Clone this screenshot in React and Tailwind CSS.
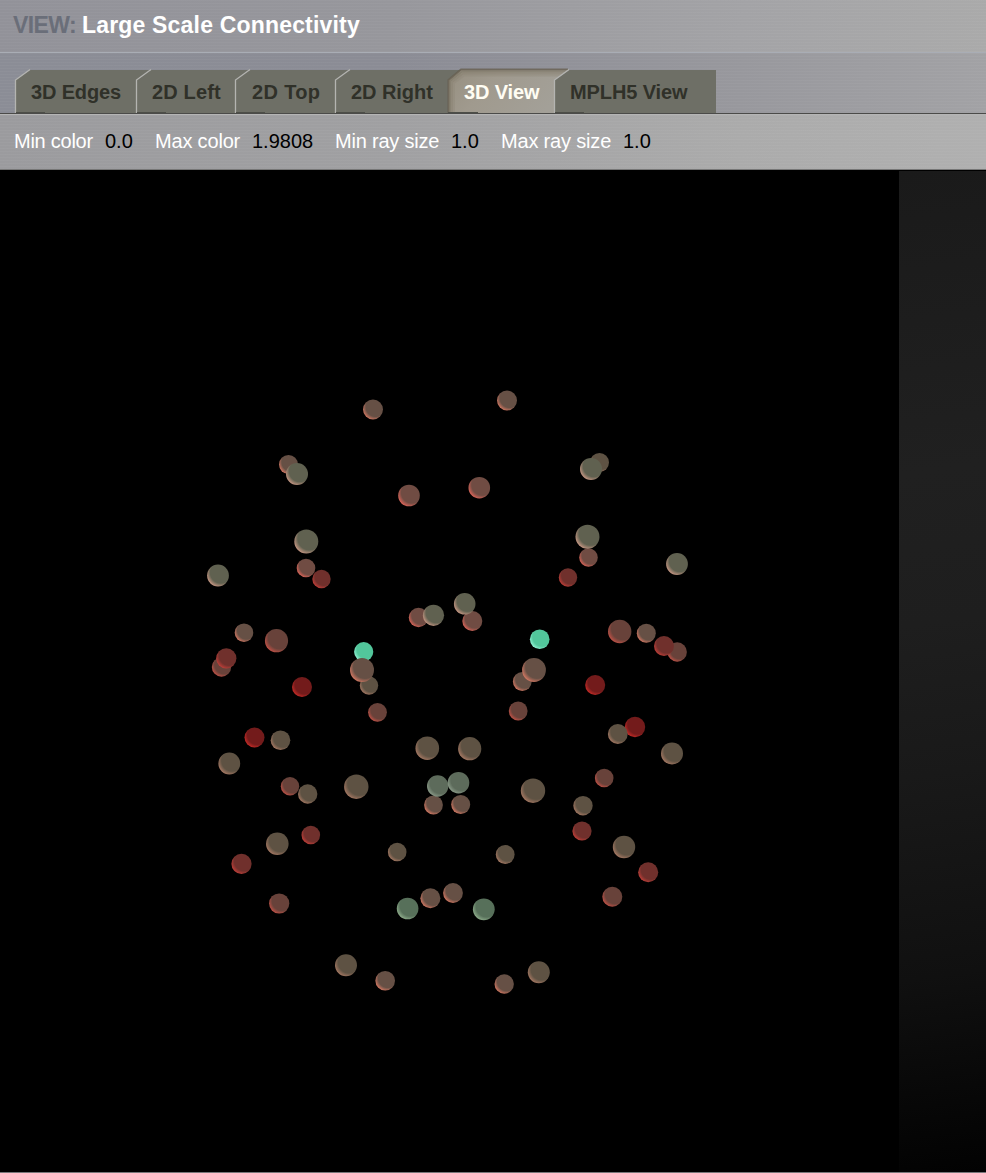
import React from "react";

const TONES = {
  brown: ["#665045", "#d87a64"],
  tan: ["#5e5243", "#a87a64"],
  olive: ["#606150", "#cb9a86"],
  sage: ["#5d6b5b", "#8c9c8a"],
  green: ["#57705a", "#8fae8c"],
  rose: ["#704c43", "#e0665a"],
  rust: ["#68423a", "#c45247"],
  brick: ["#70302c", "#c43f39"],
  red: ["#731b1b", "#cc2c28"],
  mint: ["#52c69b", "#94f4d6"],
};

// x, y, radius, tone; drawn back to front
const NODES = [
  [373, 409.5, 10, "brown"], [507, 400.5, 10, "brown"],
  [288.5, 464.5, 9.5, "brown"], [297, 474, 11, "olive"],
  [599.5, 462.5, 9.5, "tan"], [591, 469, 11, "olive"],
  [409, 495.5, 10.8, "rose"], [479.3, 487.7, 10.8, "rose"],
  [306.3, 541.5, 12, "olive"], [306, 568, 9.3, "rose"], [321.5, 579, 9.2, "brick"],
  [588.5, 557.5, 9.3, "rose"], [587.5, 536.8, 12, "olive"],
  [568, 577.5, 9.2, "brick"], [218, 575.5, 10.9, "olive"], [677, 564, 10.9, "olive"],
  [418.5, 617.5, 9.7, "rose"], [433.5, 615.3, 10.6, "olive"],
  [472.3, 621, 10, "rose"], [464.7, 603.8, 10.8, "olive"],
  [244, 632.7, 9.3, "brown"], [276.5, 640.7, 11.6, "rust"],
  [221.5, 667, 9.7, "rust"], [226.3, 658.3, 10.1, "brick"],
  [302, 687, 10, "red"], [363.7, 651.7, 9.6, "mint"],
  [369, 685.5, 9.2, "tan"], [362, 670, 12, "brown"], [377.5, 712.3, 9.4, "rust"],
  [539.7, 639.3, 9.8, "mint"], [522.3, 681.5, 9.4, "brown"], [534, 670, 11.9, "brown"],
  [518.2, 711, 9.4, "rust"], [619.7, 631.5, 11.7, "rust"], [646.3, 633.3, 9.5, "brown"],
  [677.2, 652, 9.7, "rust"], [664, 646, 10, "brick"], [595.2, 685, 10, "red"],
  [254.5, 737.5, 10, "red"], [280.5, 740.3, 9.8, "tan"], [229.3, 763.5, 10.9, "tan"],
  [635, 727, 10.2, "red"], [617.8, 734, 9.9, "tan"], [672, 753.5, 11, "tan"],
  [427.3, 748.2, 11.8, "tan"], [469.7, 748.7, 11.6, "tan"],
  [290, 786.3, 9.2, "rust"], [307.7, 794, 9.7, "tan"], [356.3, 786.7, 12.2, "tan"],
  [433.5, 805, 9.4, "brown"], [460.7, 804.5, 9.5, "brown"],
  [437.7, 786, 10.7, "sage"], [458.5, 782.7, 10.8, "sage"],
  [533, 790.7, 12.2, "tan"], [604.2, 778, 9.3, "rust"], [583, 805.7, 9.7, "tan"],
  [582, 831, 9.6, "brick"], [277.3, 843.7, 11.3, "tan"], [310.8, 835, 9.3, "brick"],
  [241.5, 863.8, 10.1, "brick"], [397.2, 852, 9.3, "tan"], [505.2, 854.5, 9.4, "tan"],
  [624, 847, 11.2, "tan"], [648.2, 872.3, 10, "brick"], [612.3, 896.7, 10, "rust"],
  [279.2, 903.5, 10.1, "rust"], [407.6, 908.5, 10.8, "green"],
  [430.4, 898.3, 10, "brown"], [453, 893, 9.9, "brown"], [483.8, 909.3, 10.9, "green"],
  [346, 965.3, 11, "tan"], [385.2, 980.7, 9.8, "brown"],
  [504.2, 984, 9.7, "brown"], [538.8, 972.3, 11, "tan"],
];

// `end` is where the tab's body stops, tucked under the next tab's bevel
const TABS = [
  { label: "3D Edges", size: "w-[121px] pl-4 tracking-[-0.15px]", end: 135 },
  { label: "2D Left", size: "w-[99px] pl-4 tracking-[0.15px]", end: 113 },
  { label: "2D Top", size: "w-[100px] pl-[17px] tracking-[0.35px]", end: 114 },
  { label: "2D Right", size: "w-[113px] pl-4 tracking-[-0.05px]", end: 126 },
  { label: "3D View", size: "w-[106px] pl-4 tracking-[-0.15px]", active: true },
  { label: "MPLH5 View", size: "w-[162px] pl-4 tracking-[-0.1px]", end: 162 },
];

const PARAMS = [
  { label: "Min color", value: "0.0", labelSize: "w-[91px] tracking-[-0.25px]", valueSize: "w-[50px]" },
  { label: "Max color", value: "1.9808", labelSize: "w-[97px] tracking-[-0.18px]", valueSize: "w-[83px]" },
  { label: "Min ray size", value: "1.0", labelSize: "w-[116px] tracking-[-0.2px]", valueSize: "w-[50px]" },
  { label: "Max ray size", value: "1.0", labelSize: "w-[122px] tracking-[-0.18px]", valueSize: "w-[50px]" },
];

function Tab({ label, size, active, end }) {
  return (
    <button
      className={`relative h-[44px] shrink-0 ${size} text-left text-[20px] leading-[46px] font-bold whitespace-nowrap ${
        active ? "text-[#fffdf3]" : "text-[#303129]"
      }`}
    >
      <svg className="absolute top-0 left-0 h-full w-full overflow-visible" aria-hidden="true">
        {active ? (
          <>
            <path d="M0 44V11L13 0.5H121L106 11V44Z" fill="url(#activeTab)" />
            <path d="M0.5 44V11L13 0.5H120" fill="none" stroke="#655e50" strokeWidth="2" opacity=".8" />
            <path d="M2 44V12L14 2.5H118" fill="none" stroke="#7b7464" strokeWidth="2" opacity=".6" />
            <path d="M4 44V13L15 4.5H115" fill="none" stroke="#857d6d" strokeWidth="2" opacity=".5" />
            <path d="M6 44V14L16 6.5H112" fill="none" stroke="#8f8778" strokeWidth="2" opacity=".4" />
            <path d="M0 43.5H30" stroke="#4d4e48" />
          </>
        ) : (
          <>
            <path d={`M1 44V11L15 1H${end}V44Z`} fill="#6e6f66" />
            <path d="M0.5 44V11L15 0.5" fill="none" stroke="#b4b4b1" strokeWidth="1.3" />
            <path d="M1 43.5H30" stroke="#4d4e48" />
          </>
        )}
      </svg>
      <span className="relative">{label}</span>
    </button>
  );
}

export default function App() {
  return (
    <div className="flex h-[1173px] w-[986px] flex-col overflow-hidden bg-black font-['Liberation_Sans',Arial,sans-serif]">
      <svg className="absolute h-0 w-0" aria-hidden="true">
        <defs>
          <linearGradient id="activeTab" x1="0" y1="0" x2="1" y2="0.3">
            <stop offset="0" stopColor="#968f80" />
            <stop offset="0.4" stopColor="#a09a8e" />
            <stop offset="1" stopColor="#a3a098" />
          </linearGradient>
        </defs>
      </svg>
      <header className="flex h-[53px] shrink-0 items-center border-b border-[#a9adb5] bg-[repeating-linear-gradient(180deg,#ffffff08_0px,#ffffff08_1px,transparent_1px,transparent_3px),linear-gradient(100deg,#929299_0%,#97979c_40%,#a3a3a6_75%,#aaaaaa_100%)] pl-[13px] text-[23px] font-bold whitespace-nowrap">
        <h1 className="flex pb-[2px]">
          <span className="w-[69px] tracking-[-0.6px] text-[#6a6e79]">VIEW:</span>
          <span className="tracking-[0.18px] text-white">Large Scale Connectivity</span>
        </h1>
      </header>
      <nav className="flex h-[61px] shrink-0 items-end border-b border-[#4b4b49] bg-[repeating-linear-gradient(180deg,#ffffff08_0px,#ffffff08_1px,transparent_1px,transparent_3px),linear-gradient(95deg,#8b8d96_0%,#8b8c95_40%,#98989d_75%,#a2a2a5_100%)] pl-[15px]">
        {TABS.map((t) => (
          <Tab key={t.label} {...t} />
        ))}
      </nav>
      <section className="flex h-[56px] shrink-0 items-center border-t border-b border-t-[#b5b5b5] border-b-[#777777] bg-[repeating-linear-gradient(180deg,#ffffff08_0px,#ffffff08_1px,transparent_1px,transparent_3px),linear-gradient(95deg,#9b9b9e_0%,#a0a0a2_40%,#ababab_75%,#b0b0b0_100%)] pb-[2px] pl-[14px] text-[20px] whitespace-nowrap">
        {PARAMS.map((p) => (
          <div key={p.label} className="flex">
            <span className={`${p.labelSize} shrink-0 text-white`}>{p.label}</span>
            <span className={`${p.valueSize} shrink-0 text-black`}>{p.value}</span>
          </div>
        ))}
      </section>
      <main className="flex h-[1002px] shrink-0">
        <svg className="h-full w-[899px] shrink-0 bg-black" viewBox="0 170 899 1002">
          <defs>
            {Object.entries(TONES).map(([name, [base, rim]]) => (
              <radialGradient key={name} id={name} cx="0.63" cy="0.37" r="0.69">
                <stop offset="0" stopColor={base} />
                <stop offset="0.7" stopColor={base} />
                <stop offset="1" stopColor={rim} />
              </radialGradient>
            ))}
          </defs>
          {NODES.map(([x, y, r, tone]) => (
            <circle key={`${x}-${y}`} cx={x} cy={y} r={r} fill={`url(#${tone})`} />
          ))}
        </svg>
        <aside className="grow border-t border-black bg-[linear-gradient(172deg,#1a1a1a_0%,#202020_30%,#1e1e1e_45%,#191919_60%,#101010_80%,#060606_94%,#020202_100%)]" />
      </main>
      <footer className="h-px shrink-0 bg-[#77777a]" />
    </div>
  );
}
